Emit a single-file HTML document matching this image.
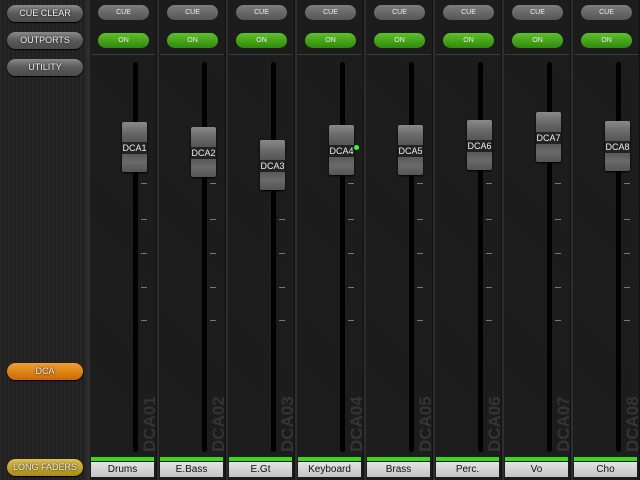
<!DOCTYPE html>
<html><head><meta charset="utf-8"><style>
*{margin:0;padding:0;box-sizing:border-box}
body{width:640px;height:480px;overflow:hidden;background:#1a1a1a;font-family:"Liberation Sans",sans-serif;position:relative}
.left{position:absolute;left:0;top:0;width:88px;height:480px;background:repeating-linear-gradient(90deg,#262626 0 2px,#202020 2px 4px);border-right:2px solid #2c2c2c}
.lb{position:absolute;left:7px;width:76px;height:17px;border-radius:9px;font-size:9px;color:#eee;text-align:center;line-height:17px;text-shadow:0 0 2px #000;background:linear-gradient(#8a8a8a,#5a5a5a 50%,#4a4a4a);box-shadow:0 1px 1px #000}
.strip{position:absolute;top:0;width:69px;height:480px;background:#1c1c1c;border-left:2px solid #2e2e2e;border-right:1px solid #111}
.cue{position:absolute;left:8px;top:5px;width:51px;height:15px;border-radius:8px;background:linear-gradient(#7d7d7d,#555);color:#eee;font-size:7px;text-align:center;line-height:15px}
.on{position:absolute;left:8px;top:33px;width:51px;height:15px;border-radius:8px;background:linear-gradient(#5fbf2a,#2f8a0c);color:#eee;font-size:7px;text-align:center;line-height:15px}
.sep{position:absolute;left:1px;right:1px;top:54px;height:1px;background:#3a3a3a}
.area{position:absolute;left:0;right:0;top:55px;height:400px;background:repeating-linear-gradient(45deg,#1f1f1f 0 1px,#1b1b1b 1px 3px)}
.slot{position:absolute;left:43px;top:62px;width:5px;height:390px;background:#000;border-radius:3px}
.tick{position:absolute;left:51px;width:6px;height:1px;background:#777}
.cap{position:absolute;left:32px;width:25px;height:50px;border-radius:2px;background:linear-gradient(#8a8a8a,#6a6a6a 20%,#555 40%,#3a3a3a 50%,#555 60%,#6a6a6a 80%,#555);box-shadow:0 1px 2px #000}
.cap span{position:absolute;left:0;right:0;top:20px;height:12px;background:#222;color:#eee;font-size:9px;text-align:center;line-height:12px}
.vl{position:absolute;left:50px;font-size:17px;font-weight:bold;color:#343434;transform:rotate(-90deg);transform-origin:left top;width:62px;top:452px}
.gbar{position:absolute;left:1px;right:2px;top:457px;height:4px;background:#3dd61a}
.name{position:absolute;left:1px;right:2px;top:462px;height:15px;background:linear-gradient(#e4e4e4,#c4c4c4);color:#111;font-size:10px;text-align:center;line-height:15px}
</style></head><body>
<div class="left">
<div class="lb" style="top:5px">CUE CLEAR</div>
<div class="lb" style="top:32px">OUTPORTS</div>
<div class="lb" style="top:59px">UTILITY</div>
<div class="lb" style="top:363px;background:linear-gradient(#f0a030,#c86a00)">DCA</div>
<div class="lb" style="top:459px;background:linear-gradient(#e0c050,#a88a10)">LONG FADERS</div>
</div>
<div id="s"></div>
<script>
var names=["Drums","E.Bass","E.Gt","Keyboard","Brass","Perc.","Vo","Cho"];
var caps=[122,127,140,125,125,120,112,121];
var h="";
for(var i=0;i<8;i++){
var x=88+69*i;
h+='<div class="strip" style="left:'+x+'px"><div class="area"></div><div class="cue">CUE</div><div class="on">ON</div><div class="sep"></div><div class="slot"></div>';
[183,219,253,287,320].forEach(function(y){h+='<div class="tick" style="top:'+y+'px"></div>'});
h+='<div class="vl">DCA0'+(i+1)+'</div>';
h+='<div class="cap" style="top:'+caps[i]+'px"><span>DCA'+(i+1)+'</span></div>';
if(i==3)h+='<div style="position:absolute;left:57px;top:145px;width:5px;height:5px;border-radius:50%;background:#3f3"></div>';
h+='<div class="gbar"></div><div class="name">'+names[i]+'</div></div>';
}
document.getElementById("s").innerHTML=h;
</script>
</body></html>
